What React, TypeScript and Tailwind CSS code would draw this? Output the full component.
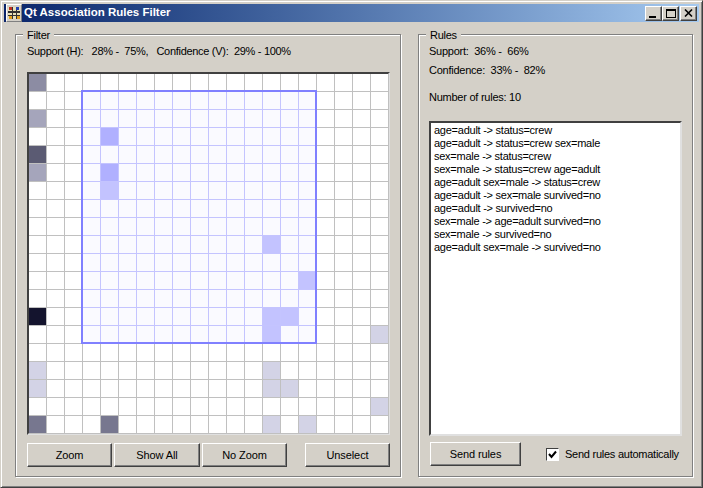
const rules = [
  "age=adult -> status=crew",
  "age=adult -> status=crew sex=male",
  "sex=male -> status=crew",
  "sex=male -> status=crew age=adult",
  "age=adult sex=male -> status=crew",
  "age=adult -> sex=male survived=no",
  "age=adult -> survived=no",
  "sex=male -> age=adult survived=no",
  "sex=male -> survived=no",
  "age=adult sex=male -> survived=no",
];

const cellColors: Record<string, string> = {
  "0,0": "#8c8ca3",
  "2,0": "#a5a5bb",
  "4,0": "#5b5b73",
  "5,0": "#a5a5bb",
  "13,0": "#14142e",
  "16,0": "#d3d3e6",
  "17,0": "#d3d3e6",
  "19,0": "#77778f",
  "19,4": "#77778f",
  "3,4": "#b0b0ff",
  "5,4": "#b0b0ff",
  "6,4": "#c3c3ff",
  "9,13": "#c3c3ff",
  "11,15": "#c3c3ff",
  "13,13": "#c3c3ff",
  "13,14": "#c3c3ff",
  "14,13": "#c3c3ff",
  "14,19": "#d3d3e6",
  "16,13": "#d3d3e6",
  "17,13": "#d3d3e6",
  "17,14": "#d3d3e6",
  "18,19": "#d3d3e6",
  "19,13": "#d3d3e6",
  "19,15": "#d3d3e6",
};

function WinButton({ className, children }: { className?: string; children: React.ReactNode }) {
  return (
    <div
      className={`w-[17px] h-[15px] flex items-center justify-center bg-[#d4d0c8] border border-t-white border-l-white border-r-[#404040] border-b-[#404040] shadow-[inset_-1px_-1px_0_#808080] ${className ?? ""}`}
    >
      {children}
    </div>
  );
}

function PushButton({ label, className }: { label: string; className: string }) {
  return (
    <button
      className={`h-[24px] shrink-0 bg-[#d4d0c8] border border-t-white border-l-white border-r-[#404040] border-b-[#404040] shadow-[inset_-1px_-1px_0_#808080] text-[11px] tracking-[-0.1px] text-black ${className}`}
    >
      {label}
    </button>
  );
}

function Group({ title, className, children }: { title: string; className: string; children: React.ReactNode }) {
  return (
    <div
      className={`relative border border-[#808080] shadow-[inset_1px_1px_0_#fff,1px_1px_0_#fff] ${className}`}
    >
      <span className="absolute left-[7px] top-[-7px] bg-[#d4d0c8] px-[4px] leading-[14px]">{title}</span>
      {children}
    </div>
  );
}

function HeatGrid() {
  const cells = [];
  for (let r = 0; r < 20; r++) {
    for (let c = 0; c < 20; c++) {
      const inside = r >= 1 && r <= 14 && c >= 3 && c <= 15;
      const color = cellColors[`${r},${c}`] ?? (inside ? "#fafaff" : "#ffffff");
      cells.push(
        <div
          key={`${r}-${c}`}
          className={`border-r border-b ${inside ? "border-[#c4c4ff]" : "border-[#c0c0c0]"}`}
          style={{ backgroundColor: color }}
        />,
      );
    }
  }
  return (
    <div className="relative w-[363px] h-[363px] ml-[11px] mt-[13px] border-2 border-t-[#404040] border-l-[#404040] border-r-[#e0e0e0] border-b-[#e0e0e0] bg-[#c0c0c0]">
      <div className="grid grid-cols-[repeat(20,18px)] grid-rows-[repeat(20,18px)] w-[360px] h-[360px]">{cells}</div>
      <div className="absolute left-[52px] top-[16px] w-[236px] h-[254px] border-2 border-[#8080ff]" />
    </div>
  );
}

function AppIcon() {
  return (
    <div className="w-[16px] h-[18px] shrink-0 flex items-center justify-center bg-[#d4d0c8] border border-t-white border-l-white border-r-[#808080] border-b-[#808080]">
      <svg width="14" height="14" viewBox="0 0 14 14">
        <rect x="1" y="1" width="12" height="12" fill="#e8e0b8" />
        <rect x="2" y="1" width="3" height="3" fill="#c03020" />
        <rect x="9" y="1" width="3" height="3" fill="#2040b0" />
        <rect x="1" y="5" width="12" height="2" fill="#303030" />
        <rect x="1" y="9" width="12" height="1" fill="#303030" />
        <rect x="5" y="1" width="1" height="12" fill="#303030" />
        <rect x="9" y="4" width="1" height="9" fill="#303030" />
        <rect x="2" y="10" width="3" height="3" fill="#e0a020" />
        <rect x="10" y="10" width="3" height="3" fill="#e0a020" />
      </svg>
    </div>
  );
}

export default function App() {
  return (
    <div className="w-[703px] h-[488px] overflow-hidden bg-[#d4d0c8] border border-t-[#d4d0c8] border-l-[#d4d0c8] border-r-[#404040] border-b-[#404040] shadow-[inset_1px_1px_0_#fff,inset_-1px_-1px_0_#808080] p-[3px] flex flex-col text-black font-['Liberation_Sans',Arial,sans-serif] text-[11px] tracking-[-0.25px]">
      <div className="h-[18px] flex items-center pl-[2px] pr-[2px] bg-gradient-to-r from-[#0a246a] to-[#a6caf0] shrink-0">
        <AppIcon />
        <span className="ml-[2px] text-white font-bold text-[11.5px] tracking-normal">Qt Association Rules Filter</span>
        <div className="ml-auto flex">
          <WinButton>
            <span className="mt-[7px] mr-[2px] w-[7px] h-[2px] bg-black" />
          </WinButton>
          <WinButton>
            <span className="w-[10px] h-[9px] border border-black border-t-2" />
          </WinButton>
          <WinButton className="ml-[1px]">
            <svg width="9" height="8" viewBox="0 0 9 8">
              <path d="M1 0.5 L8 7.5 M8 0.5 L1 7.5" stroke="#000" strokeWidth="1.6" fill="none" />
            </svg>
          </WinButton>
        </div>
      </div>
      <div className="flex-1 flex pt-[12px] pl-[11px]">
        <Group title="Filter" className="w-[386px] h-[443px]">
          <div className="pl-[11px] pt-[8px] leading-[16px] whitespace-pre tracking-[-0.3px]">Support (H):   28% -  75%,   Confidence (V):  29% - 100%</div>
          <HeatGrid />
          <div className="flex ml-[11px] mt-[8px]">
            <PushButton label="Zoom" className="w-[85px]" />
            <PushButton label="Show All" className="w-[86px] ml-[2px]" />
            <PushButton label="No Zoom" className="w-[85px] ml-[2px]" />
            <PushButton label="Unselect" className="w-[85px] ml-[18px]" />
          </div>
        </Group>
        <Group title="Rules" className="w-[275px] h-[443px] ml-[17px]">
          <div className="pl-[10px] pt-[8px] leading-[16px] whitespace-pre">Support:  36% -  66%</div>
          <div className="pl-[10px] mt-[3px] leading-[16px] whitespace-pre">Confidence:  33% -  82%</div>
          <div className="pl-[10px] mt-[11px] leading-[16px]">Number of rules: 10</div>
          <div className="ml-[10px] mt-[16px] w-[253px] h-[315px] bg-white border-2 border-t-[#404040] border-l-[#404040] border-r-[#e0e0e0] border-b-[#e0e0e0] px-[3px] pt-[1px]">
            {rules.map((r) => (
              <div key={r} className="leading-[13px] whitespace-pre">{r}</div>
            ))}
          </div>
          <div className="flex items-center ml-[11px] mt-[6px]">
            <PushButton label="Send rules" className="w-[91px]" />
            <span className="ml-[25px] shrink-0 w-[13px] h-[13px] bg-white border border-t-[#404040] border-l-[#404040] border-r-white border-b-white flex items-center justify-center">
              <svg width="9" height="9" viewBox="0 0 9 9"><path d="M1 4 L3.5 7 L8 1.5" fill="none" stroke="#000" strokeWidth="2" /></svg>
            </span>
            <span className="ml-[6px] whitespace-pre">Send rules automatically</span>
          </div>
        </Group>
      </div>
    </div>
  );
}
